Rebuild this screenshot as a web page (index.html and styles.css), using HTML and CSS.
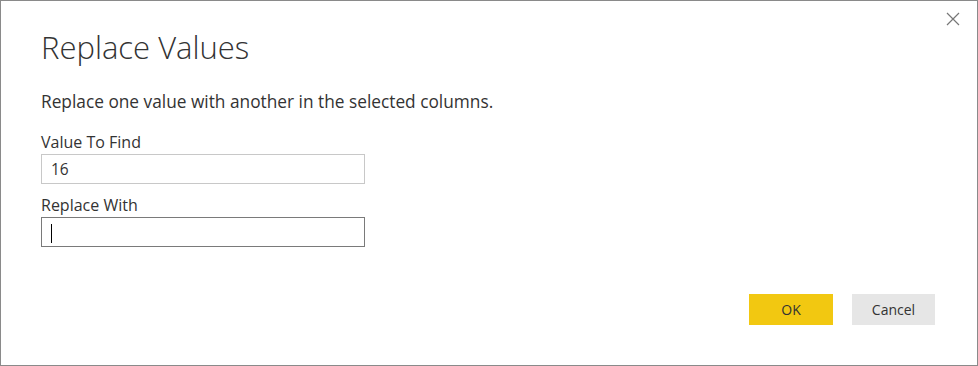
FILE: index.html
```html
<!DOCTYPE html>
<html lang="en">
<head>
    <meta charset="UTF-8">
    <meta name="viewport" content="width=device-width, initial-scale=1.0">
    <title>Replace Values</title>
    <link rel="stylesheet" href="styles.css">
</head>
<body>
    <div class="dialog">
        <div class="dialog-header">
            <h1>Replace Values</h1>
            <button class="close" aria-label="Close">
                <svg width="14" height="14" viewBox="0 0 14 14">
                    <path d="M1 1 L13 13 M13 1 L1 13" stroke="#777" stroke-width="1.2" fill="none"/>
                </svg>
            </button>
        </div>
        <p class="description">Replace one value with another in the selected columns.</p>
        <div class="field first">
            <label>Value To Find</label>
            <div class="input">16</div>
        </div>
        <div class="field">
            <label>Replace With</label>
            <div class="input focused"><span class="caret"></span></div>
        </div>
        <div class="dialog-footer">
            <button class="btn btn-primary">OK</button>
            <button class="btn">Cancel</button>
        </div>
    </div>
</body>
</html>
```

FILE: styles.css
```css
html, body {
    margin: 0;
    height: 100%;
}
body {
    font-family: "Open Sans", "Liberation Sans", sans-serif;
    background: #ffffff;
    color: #333333;
}
.dialog {
    box-sizing: border-box;
    height: 366px;
    width: 978px;
    border: 1px solid #8a8a8a;
    padding: 0 42px 40px 40px;
    display: flex;
    flex-direction: column;
}
.dialog-header {
    display: flex;
    justify-content: space-between;
    align-items: flex-start;
}
h1 {
    margin: 26px 0 0 0;
    font-size: 31px;
    font-weight: 300;
    line-height: 40px;
    color: #333;
}
.close {
    margin: 11px -25px 0 0;
    padding: 0;
    border: none;
    background: none;
    width: 14px;
    height: 14px;
    cursor: pointer;
}
.close svg {
    display: block;
}
.description {
    margin: 24px 0 0 0;
    font-size: 17.3px;
    line-height: 22px;
}
.field {
    display: flex;
    flex-direction: column;
    width: 324px;
}
.field label {
    font-size: 16px;
    line-height: 20px;
    margin-top: 11px;
    margin-bottom: 2px;
}
.field.first label {
    margin-top: 19px;
}
.input {
    box-sizing: border-box;
    height: 30px;
    border: 1px solid #c8c8c8;
    padding: 0 9px;
    font-size: 15.5px;
    line-height: 28px;
}
.input.focused {
    border-color: #7a7a7a;
}
.caret {
    display: inline-block;
    width: 1px;
    height: 19px;
    background: #000;
    vertical-align: middle;
}
.dialog-footer {
    margin-top: auto;
    display: flex;
    justify-content: flex-end;
    gap: 19px;
}
.btn {
    width: 83px;
    height: 31px;
    border: none;
    border-radius: 0;
    background: #e6e6e6;
    color: #333;
    font-family: "Open Sans", "Liberation Sans", sans-serif;
    font-size: 14px;
    cursor: pointer;
}
.btn-primary {
    width: 84px;
    background: #f2c811;
}
```
